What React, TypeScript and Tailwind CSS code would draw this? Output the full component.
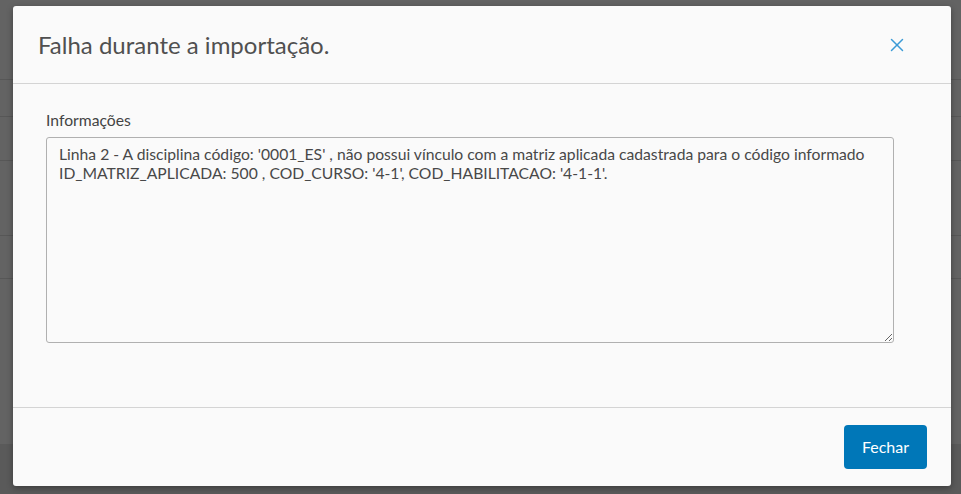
import { X } from 'lucide-react';

const mensagem =
    "Linha 2 - A disciplina código: '0001_ES' , não possui vínculo com a matriz aplicada cadastrada para o código informado ID_MATRIZ_APLICADA: 500 , COD_CURSO: '4-1', COD_HABILITACAO: '4-1-1'.";

export default function App() {
    return (
        <div className="relative h-[494px] w-[961px] overflow-hidden bg-[#636363] font-['Lato','Noto_Sans',sans-serif]">
            {/* Página por trás do overlay */}
            <div className="flex flex-col">
                <div className="h-[80px] border-b border-[#575757]" />
                <div className="h-[37px] border-b border-[#575757]" />
                <div className="h-[44px] border-b border-[#575757]" />
                <div className="h-[75px] border-b border-[#575757]" />
                <div className="h-[43px] border-b border-[#575757]" />
                <div className="h-[165px]" />
                <div className="h-[50px] bg-[#5a5a5a]" />
            </div>

            {/* Modal */}
            <div className="absolute left-[13px] top-[6px] flex h-[480px] w-[938px] flex-col rounded-[3px] bg-[#fafafa] shadow-[0_2px_6px_rgba(0,0,0,0.35)]">
                <div className="flex h-[78px] items-center justify-between border-b border-[#d4d4d4] pl-[25px] pr-[43px]">
                    <h2 className="text-[24px] leading-[28px] text-[#505050]">Falha durante a importação.</h2>
                    <button className="text-[#3b9bd6]">
                        <X size={22} strokeWidth={1.6} />
                    </button>
                </div>

                <div className="flex-1 border-b border-[#d4d4d4] px-[33px] pt-[27px]">
                    <label className="block text-[15.7px] leading-[18px] text-[#444]">Informações</label>
                    <textarea
                        readOnly
                        value={mensagem}
                        className="mt-[8px] block h-[206px] w-[848px] resize-y rounded-[3px] border border-[#b0b0b0] bg-[#fafafa] px-[12px] py-[7px] text-[15.7px] leading-[19px] text-[#484848] outline-none"
                    />
                </div>

                <div className="flex h-[78px] items-center justify-end pr-[24px]">
                    <button className="h-[44px] w-[83px] rounded-[4px] bg-[#0077b8] text-[16px] text-white">
                        Fechar
                    </button>
                </div>
            </div>
        </div>
    );
}
